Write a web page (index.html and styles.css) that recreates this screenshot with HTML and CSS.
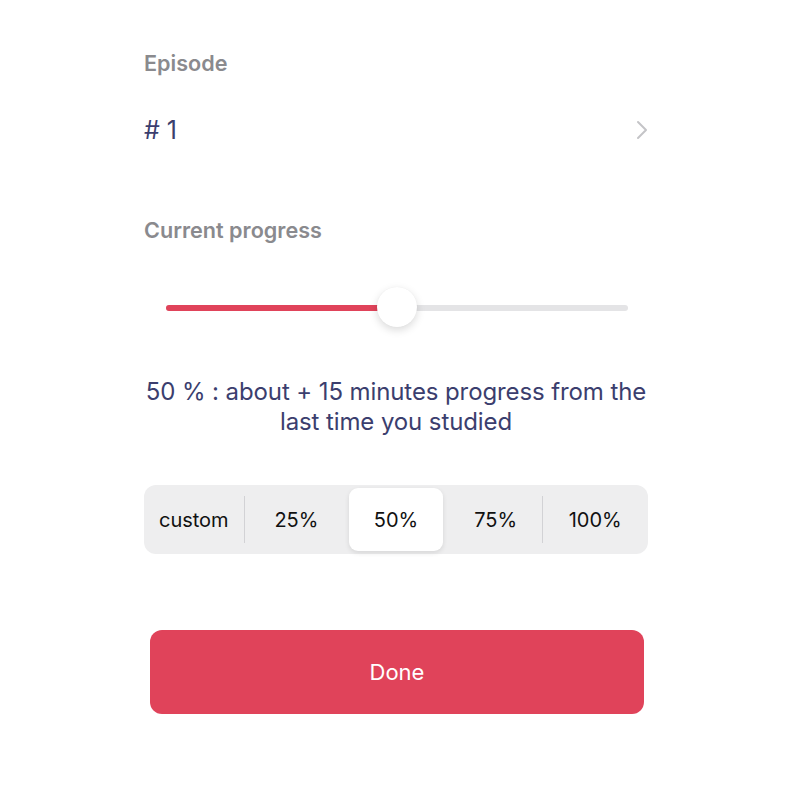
FILE: index.html
```html
<!DOCTYPE html>
<html>
<head>
<meta charset="utf-8">
<link rel="stylesheet" href="styles.css">
</head>
<body>
<main class="sheet">
  <div class="label label-episode">Episode</div>
  <div class="episode-row">
    <span class="episode-value"># 1</span>
    <svg class="chevron" width="12" height="20" viewBox="0 0 12 20"><path d="M2 2 L10 10 L2 18" fill="none" stroke="#c4c4c7" stroke-width="2" stroke-linecap="round" stroke-linejoin="round"/></svg>
  </div>
  <div class="label label-progress">Current progress</div>
  <div class="slider">
    <div class="track">
      <div class="fill" style="width: 50%"></div>
      <div class="thumb" style="left: 50%"></div>
    </div>
  </div>
  <p class="summary">50 % : about + 15 minutes progress from the<br>last time you studied</p>
  <div class="segmented">
    <div class="seg">custom</div>
    <div class="seg sep">25%</div>
    <div class="seg selected">50%</div>
    <div class="seg">75%</div>
    <div class="seg sep">100%</div>
  </div>
  <button class="done">Done</button>
</main>
</body>
</html>
```

FILE: styles.css
```css
* { box-sizing: border-box; }
html, body {
  margin: 0;
  padding: 0;
  background: #ffffff;
  font-family: Inter, "Noto Sans", "Liberation Sans", sans-serif;
}
.sheet {
  width: 504px;
  margin-left: 144px;
  padding-top: 49px;
  display: flex;
  flex-direction: column;
}
.label {
  font-size: 21.6px;
  font-weight: 600;
  color: #8a8a8e;
  line-height: 28px;
}
.episode-row {
  margin-top: 37px;
  height: 32px;
  display: flex;
  align-items: center;
  justify-content: space-between;
}
.episode-value {
  font-size: 25px;
  color: #3b3e6e;
  line-height: 32px;
}
.label-progress { margin-top: 70px; }
.slider {
  margin-top: 52px;
  padding: 0 20px 0 22px;
  height: 24px;
  display: flex;
  align-items: center;
}
.track {
  position: relative;
  width: 100%;
  height: 6px;
  border-radius: 3px;
  background: #e4e4e6;
}
.fill {
  height: 100%;
  border-radius: 3px;
  background: #e0435a;
}
.thumb {
  position: absolute;
  top: 50%;
  width: 40px;
  height: 40px;
  margin: -21px 0 0 -20px;
  border-radius: 50%;
  background: #ffffff;
  box-shadow: 0 3px 8px rgba(0,0,0,0.15), 0 0 1px rgba(0,0,0,0.06);
}
.summary {
  margin: 57px 0 0;
  text-align: center;
  font-size: 24px;
  line-height: 30px;
  color: #3b3e6e;
  letter-spacing: -0.1px;
}
.segmented {
  margin-top: 48px;
  height: 69px;
  padding: 3px;
  border-radius: 12px;
  background: #eeeeef;
  display: grid;
  grid-template-columns: repeat(5, 1fr);
}
.seg {
  display: flex;
  align-items: center;
  justify-content: center;
  font-size: 20px;
  color: #111111;
  position: relative;
}
.seg:first-child { padding-right: 6px; }
.seg.sep::before {
  content: "";
  position: absolute;
  left: -3px;
  top: 8px;
  bottom: 8px;
  width: 1px;
  background: #d2d2d5;
}
.seg.selected {
  margin: 0 3px;
  background: #ffffff;
  border-radius: 9px;
  box-shadow: 0 2px 5px rgba(0,0,0,0.1);
}
.done {
  margin: 76px 4px 0 6px;
  height: 84px;
  border: none;
  border-radius: 12px;
  background: #e0435a;
  color: #ffffff;
  font-family: inherit;
  font-size: 22px;
}
```
